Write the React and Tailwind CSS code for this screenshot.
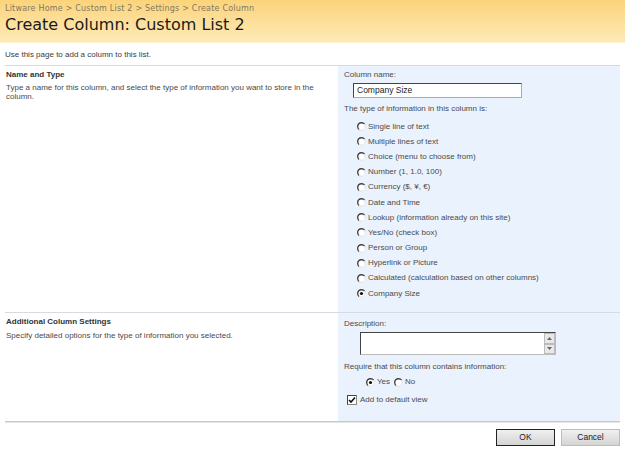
import React from "react";

function Radio({ checked }) {
  return (
    <svg width="9" height="9" viewBox="0 0 9 9" className="shrink-0">
      <defs>
        <linearGradient id="rg" x1="0" y1="0" x2="1" y2="1">
          <stop offset="0" stopColor="#2a2a2a" />
          <stop offset="0.5" stopColor="#5a5a5a" />
          <stop offset="0.56" stopColor="#dcdcdc" />
          <stop offset="1" stopColor="#f6f6f6" />
        </linearGradient>
      </defs>
      <circle cx="4.5" cy="4.5" r="3.8" fill="#fff" stroke="url(#rg)" strokeWidth="1.4" />
      {checked && <circle cx="4.5" cy="4.5" r="1.6" fill="#111" />}
    </svg>
  );
}

function Checkbox() {
  return (
    <div className="w-[10px] h-[10px] bg-white border-t border-l border-t-[#444] border-l-[#444] border-b border-r border-b-[#888] border-r-[#888] flex items-center justify-center shrink-0">
      <svg width="8" height="8" viewBox="0 0 8 8">
        <path d="M1 4 L3 6 L7 1.5" fill="none" stroke="#111" strokeWidth="1.6" />
      </svg>
    </div>
  );
}

const types = [
  "Single line of text",
  "Multiple lines of text",
  "Choice (menu to choose from)",
  "Number (1, 1.0, 100)",
  "Currency ($, ¥, €)",
  "Date and Time",
  "Lookup (information already on this site)",
  "Yes/No (check box)",
  "Person or Group",
  "Hyperlink or Picture",
  "Calculated (calculation based on other columns)",
  "Company Size",
];

export default function App() {
  const body = { fontFamily: '"Liberation Sans", Arial, sans-serif' };
  return (
    <div className="w-[625px] h-[456px] bg-white overflow-hidden text-[8px] text-[#4a4a4a]" style={body}>
      {/* header */}
      <div className="h-[43px] bg-gradient-to-b from-[#fbd47a] to-[#feeab6] border-b border-[#fdf1d0] px-[5px] pt-[3px]">
        <div className="text-[8px] leading-[12px] text-[#857660] tracking-[0.2px]" style={{ fontFamily: '"DejaVu Sans", Verdana, sans-serif' }}>
          Litware Home &gt; Custom List 2 &gt; Settings &gt; Create Column
        </div>
        <div className="text-[16px] leading-[20px] text-[#1a1a1a]" style={{ fontFamily: '"DejaVu Sans", Verdana, sans-serif' }}>
          Create Column: Custom List 2
        </div>
      </div>

      <div className="px-[5px] pt-[7px] h-[22px] leading-[10px] text-[#3c3c3c]">
        Use this page to add a column to this list.
      </div>

      <div className="mx-[5px] border-t border-[#d6dbe2]">
        {/* row 1 */}
        <div className="flex h-[247px] border-b border-[#d6dbe2]">
          <div className="w-[333px] pl-[1px] pt-[4px]">
            <div className="font-bold text-[#333] leading-[10px]">Name and Type</div>
            <div className="mt-[3px] leading-[9px] w-[318px]">
              Type a name for this column, and select the type of information you want to store in the column.
            </div>
          </div>
          <div className="flex-1 bg-[#eaf2fd] pl-[6px] pt-[4px]">
            <div className="leading-[10px]">Column name:</div>
            <div className="ml-[9px] mt-[3px] w-[169px] h-[15px] bg-white border border-t-[#444] border-l-[#444] border-r-[#aaa] border-b-[#aaa] text-[8.5px] text-[#222] pl-[3px] leading-[13px]">
              Company Size
            </div>
            <div className="mt-[6px] leading-[10px]">The type of information in this column is:</div>
            <div className="mt-[5px] ml-[13px] flex flex-col">
              {types.map((t, i) => (
                <div key={t} className="flex items-center gap-[2px] h-[15.2px]">
                  <Radio checked={i === types.length - 1} />
                  <span className="leading-[10px]">{t}</span>
                </div>
              ))}
            </div>
          </div>
        </div>
        {/* row 2 */}
        <div className="flex h-[108px]">
          <div className="w-[333px] pl-[1px] pt-[4px]">
            <div className="font-bold text-[#333] leading-[10px]">Additional Column Settings</div>
            <div className="mt-[4px] leading-[9px]">
              Specify detailed options for the type of information you selected.
            </div>
          </div>
          <div className="flex-1 bg-[#eaf2fd] pl-[6px] pt-[6px]">
            <div className="leading-[10px]">Description:</div>
            <div className="ml-[16px] mt-[3px] w-[196px] h-[23px] bg-white border border-t-[#444] border-l-[#444] border-r-[#bbb] border-b-[#bbb] flex justify-end">
              <div className="w-[11px] h-full flex flex-col bg-[#eee]">
                <div className="flex-1 border border-[#bbb] flex items-center justify-center bg-[#e8e8e8]">
                  <svg width="5" height="3" viewBox="0 0 5 3"><path d="M0 3 L2.5 0 L5 3Z" fill="#666" /></svg>
                </div>
                <div className="flex-1 border border-[#bbb] flex items-center justify-center bg-[#e8e8e8]">
                  <svg width="5" height="3" viewBox="0 0 5 3"><path d="M0 0 L2.5 3 L5 0Z" fill="#666" /></svg>
                </div>
              </div>
            </div>
            <div className="mt-[7px] leading-[10px]">Require that this column contains information:</div>
            <div className="mt-[5px] ml-[22px] flex items-center h-[10px]">
              <Radio checked />
              <span className="ml-[2px] leading-[10px]">Yes</span>
              <span className="ml-[4px]"><Radio /></span>
              <span className="ml-[2px] leading-[10px]">No</span>
            </div>
            <div className="mt-[8px] ml-[3px] flex items-center gap-[3px]">
              <Checkbox />
              <span className="leading-[10px]">Add to default view</span>
            </div>
          </div>
        </div>
        <div className="h-[2px] bg-[#c8c8c8] border-b border-[#e6e6e6]" />
        <div className="flex justify-end gap-[6px] mt-[6px]">
          <button className="w-[59px] h-[17px] bg-gradient-to-b from-[#f0f0f0] to-[#d4d4d4] border border-[#222] text-[8.5px] text-[#222] leading-[13px]" style={body}>
            OK
          </button>
          <button className="w-[59px] h-[17px] bg-gradient-to-b from-[#f0f0f0] to-[#d4d4d4] border border-[#bdbdbd] text-[8.5px] text-[#222] leading-[13px]" style={body}>
            Cancel
          </button>
        </div>
      </div>
    </div>
  );
}
